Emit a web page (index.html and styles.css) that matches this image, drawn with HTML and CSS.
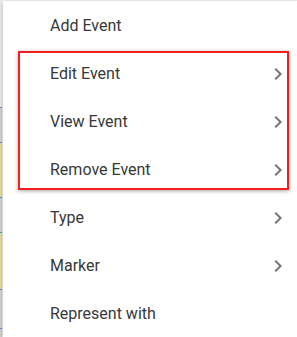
FILE: index.html
```html
<!DOCTYPE html>
<html>
<head>
<meta charset="utf-8">
<link rel="stylesheet" href="styles.css">
</head>
<body>
<div class="screen">
  <div class="edge">
    <div class="seg seg-top"></div>
    <div class="seg seg-blue"></div>
    <div class="seg seg-gray g1"></div>
    <div class="seg seg-blue"></div>
    <div class="seg seg-yellow y1"></div>
    <div class="seg seg-blue"></div>
    <div class="seg seg-gray g2"></div>
    <div class="seg seg-blue"></div>
    <div class="seg seg-yellow y2"></div>
    <div class="seg seg-blue"></div>
    <div class="seg seg-gray g3"></div>
    <div class="seg seg-blue"></div>
    <div class="seg seg-gray g4"></div>
  </div>
  <ul class="menu">
    <li class="item"><span>Add Event</span></li>
    <li class="item"><span>Edit Event</span><svg class="chev" viewBox="0 0 24 24"><path d="M10 6L8.59 7.41 13.17 12l-4.58 4.59L10 18l6-6z"/></svg></li>
    <li class="item"><span>View Event</span><svg class="chev" viewBox="0 0 24 24"><path d="M10 6L8.59 7.41 13.17 12l-4.58 4.59L10 18l6-6z"/></svg></li>
    <li class="item"><span>Remove Event</span><svg class="chev" viewBox="0 0 24 24"><path d="M10 6L8.59 7.41 13.17 12l-4.58 4.59L10 18l6-6z"/></svg></li>
    <li class="item"><span>Type</span><svg class="chev" viewBox="0 0 24 24"><path d="M10 6L8.59 7.41 13.17 12l-4.58 4.59L10 18l6-6z"/></svg></li>
    <li class="item"><span>Marker</span><svg class="chev" viewBox="0 0 24 24"><path d="M10 6L8.59 7.41 13.17 12l-4.58 4.59L10 18l6-6z"/></svg></li>
    <li class="item"><span>Represent with</span></li>
  </ul>
  <div class="highlight"></div>
</div>
</body>
</html>
```
FILE: styles.css
```css
html, body {
  margin: 0;
  padding: 0;
  background: #f3f3f3;
}
.screen {
  position: relative;
  width: 297px;
  height: 337px;
  overflow: hidden;
  display: flex;
  flex-direction: row;
  font-family: Roboto, "Liberation Sans", sans-serif;
}
.edge {
  width: 2px;
  flex: none;
  display: flex;
  flex-direction: column;
}
.seg { flex: none; }
.seg-top { height: 107px; background: #e9e9e9; }
.seg-blue { height: 1px; background: #5b8fd0; }
.seg-gray { background: #cfcfcf; }
.seg-yellow { background: #e6dc8f; }
.g1 { height: 34px; }
.y1 { height: 54px; }
.g2 { height: 34px; }
.y2 { height: 56px; }
.g3 { height: 38px; }
.g4 { height: 10px; }
.menu {
  flex: 1;
  list-style: none;
  margin: 1px 0 0 1px;
  padding: 1px 7px 0 47px;
  background: #fff;
  box-shadow: 0 2px 4px rgba(0,0,0,0.22), 0 0 2px rgba(0,0,0,0.12);
}
.item {
  height: 48px;
  display: flex;
  align-items: center;
  justify-content: space-between;
  font-size: 16px;
  line-height: 48px;
  color: #383838;
}
.chev {
  width: 24px;
  height: 24px;
  fill: #757575;
  flex: none;
}
.highlight {
  position: absolute;
  left: 18px;
  top: 51px;
  width: 267px;
  height: 135px;
  border: 2px solid #f21d1d;
  box-shadow: 0 1px 4px rgba(0,0,0,0.35);
}
```
